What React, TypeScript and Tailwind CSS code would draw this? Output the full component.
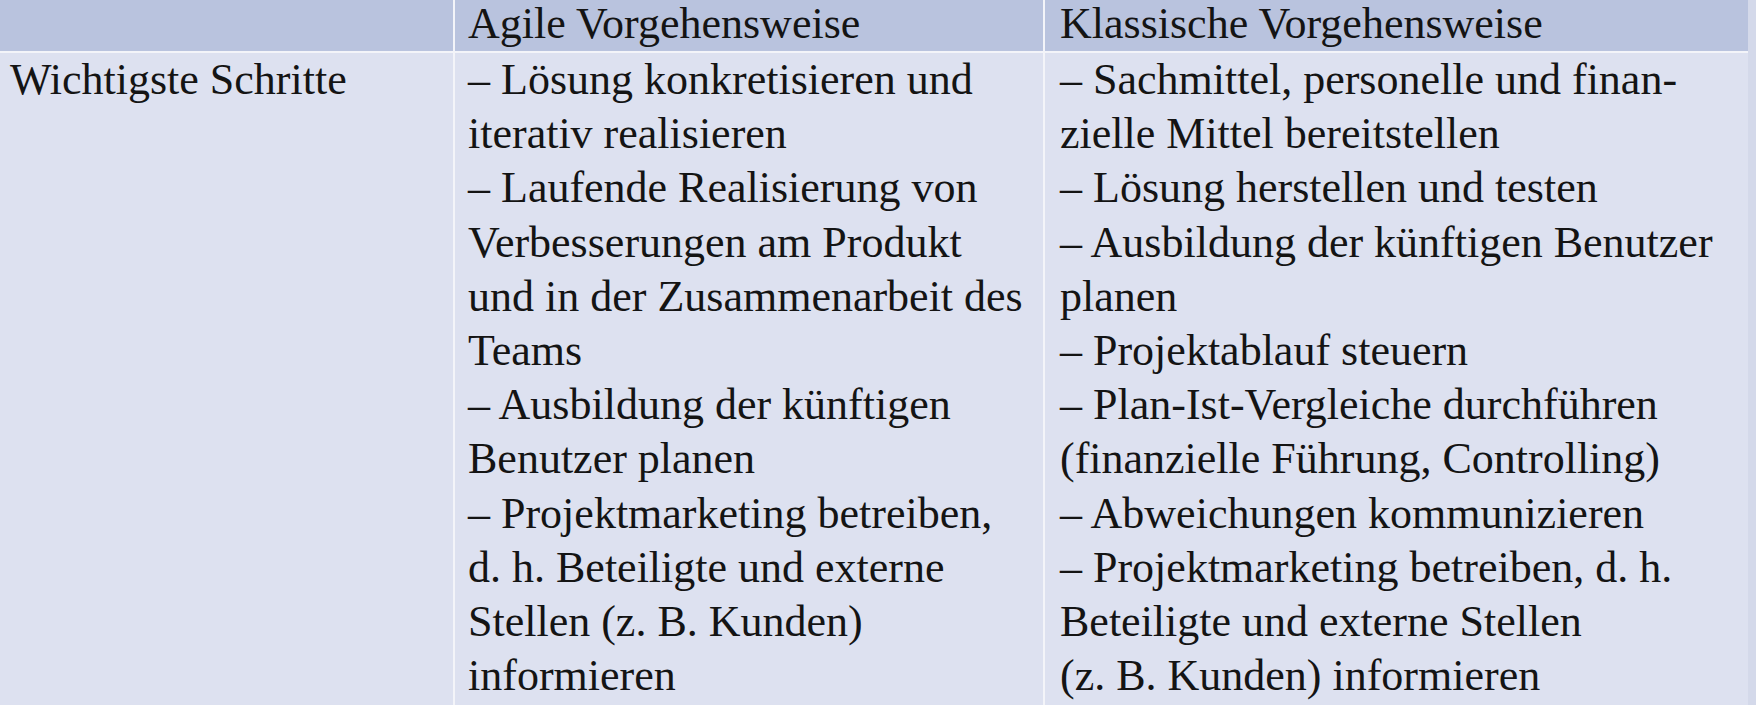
export default function App() {
  const agile = [
    "– Lösung konkretisieren und",
    "iterativ realisieren",
    "– Laufende Realisierung von",
    "Verbesserungen am Produkt",
    "und in der Zusammenarbeit des",
    "Teams",
    "– Ausbildung der künftigen",
    "Benutzer planen",
    "– Projektmarketing betreiben,",
    "d. h. Beteiligte und externe",
    "Stellen (z. B. Kunden)",
    "informieren",
  ];

  const klassisch = [
    "– Sachmittel, personelle und finan-",
    "zielle Mittel bereitstellen",
    "– Lösung herstellen und testen",
    "– Ausbildung der künftigen Benutzer",
    "planen",
    "– Projektablauf steuern",
    "– Plan-Ist-Vergleiche durchführen",
    "(finanzielle Führung, Controlling)",
    "– Abweichungen kommunizieren",
    "– Projektmarketing betreiben, d. h.",
    "Beteiligte und externe Stellen",
    "(z. B. Kunden) informieren",
  ];

  return (
    <div className="w-[1762px] h-[705px] overflow-hidden bg-white text-[#141414] text-[44px] font-['Liberation_Serif','Times_New_Roman',serif]">
      <div className="w-[1756px] border-r-[8px] border-[#d4d9ea]">
        {/* header row */}
        <div className="grid grid-cols-[453px_588px_1fr] gap-x-[2px] bg-[#f3f4f9] h-[53px] pb-[2px]">
          <div className="bg-[#b9c3de]" />
          <div className="bg-[#b9c3de] pl-[13px] leading-[48px] whitespace-nowrap">Agile Vorgehensweise</div>
          <div className="bg-[#b9c3de] pl-[15px] leading-[48px] whitespace-nowrap">Klassische Vorgehensweise</div>
        </div>

        {/* body row */}
        <div className="grid grid-cols-[453px_588px_1fr] gap-x-[2px] bg-[#f3f4f9] h-[652px]">
          <div className="bg-[#dde1f0] pl-[10px] leading-[54.2px] whitespace-nowrap">Wichtigste Schritte</div>
          <div className="bg-[#dde1f0] pl-[13px] leading-[54.2px] whitespace-nowrap">
            {agile.map((line, i) => (
              <div key={i}>{line}</div>
            ))}
          </div>
          <div className="bg-[#dde1f0] pl-[15px] leading-[54.2px] whitespace-nowrap">
            {klassisch.map((line, i) => (
              <div key={i}>{line}</div>
            ))}
          </div>
        </div>
      </div>
    </div>
  );
}
